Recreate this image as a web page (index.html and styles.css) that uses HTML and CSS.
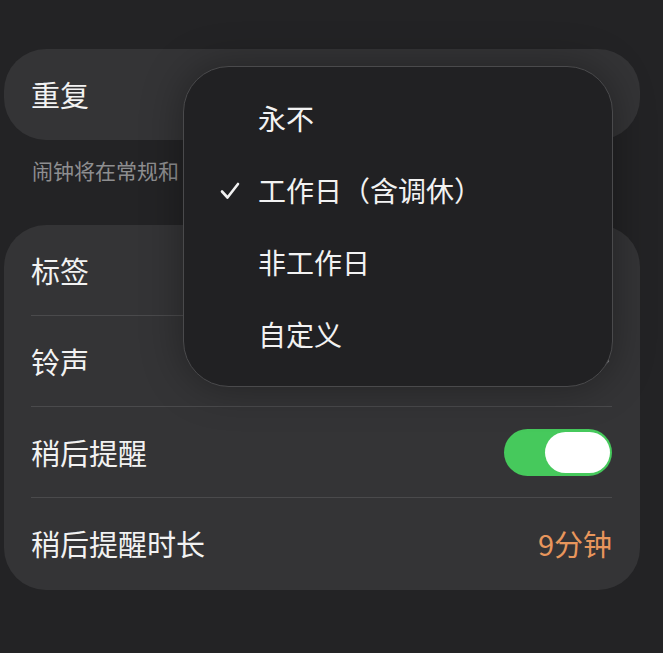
FILE: index.html
```html
<!DOCTYPE html>
<html lang="zh-CN">
<head>
    <meta charset="UTF-8">
    <meta name="viewport" content="width=device-width, initial-scale=1.0">
    <title>闹钟设置</title>
    <link rel="stylesheet" href="styles.css">
</head>
<body>

    <!-- Repeat -->
    <div class="card card-repeat">
        <div class="row">
            <span class="row-title">重复</span>
        </div>
    </div>
    <p class="caption">闹钟将在常规和</p>

    <!-- Options -->
    <div class="card">
        <div class="row">
            <span class="row-title">标签</span>
        </div>
        <div class="divider"></div>
        <div class="row">
            <span class="row-title">铃声</span>
            <svg class="chevron" width="12" height="20" viewBox="0 0 12 20">
                <path d="M2 2 L10 10 L2 18" fill="none" stroke="#8a8a8c" stroke-width="2.4" stroke-linecap="round" stroke-linejoin="round"/>
            </svg>
        </div>
        <div class="divider"></div>
        <div class="row">
            <span class="row-title">稍后提醒</span>
            <div class="switch on"><div class="knob"></div></div>
        </div>
        <div class="divider"></div>
        <div class="row">
            <span class="row-title">稍后提醒时长</span>
            <span class="row-value">9分钟</span>
        </div>
    </div>

    <!-- Repeat menu (popup) -->
    <div class="menu">
        <div class="menu-item">永不</div>
        <div class="menu-item checked">
            <svg class="check" width="20" height="18" viewBox="0 0 20 18">
                <path d="M2 9.5 L7.5 15.5 L18 2" fill="none" stroke="#f2f2f2" stroke-width="2.6" stroke-linecap="round" stroke-linejoin="round"/>
            </svg>
            工作日（含调休）
        </div>
        <div class="menu-item">非工作日</div>
        <div class="menu-item">自定义</div>
    </div>

</body>
</html>
```

FILE: styles.css
```css
/* Page */
body {
    margin: 0;
    padding: 49px 23px 0 4px;
    background-color: #232325;
    font-family: "Noto Sans CJK SC", "Noto Sans", sans-serif;
    color: #f2f2f2;
    height: 653px;
    box-sizing: border-box;
    overflow: hidden;
    position: relative;
}

/* Cards */
.card {
    background-color: #343436;
    border-radius: 42px;
    padding: 0 28px 2px 27px;
}

.card-repeat {
    height: 91px;
    display: flex;
    align-items: center;
    padding-bottom: 0;
}

.row {
    height: 90px;
    display: flex;
    align-items: center;
    justify-content: space-between;
}

.card-repeat .row {
    height: auto;
    flex: 1;
}

.row-title {
    font-size: 29px;
    line-height: 1;
}

.row-value {
    font-size: 29px;
    color: #e8965c;
}

.divider {
    height: 1px;
    background-color: #4a4a4c;
}

.caption {
    margin: 15px 0 40px 28px;
    font-size: 21px;
    line-height: 30px;
    color: #8e8e90;
    white-space: nowrap;
}

.chevron {
    margin-right: 2px;
}

/* Toggle switch */
.switch {
    width: 108px;
    height: 47px;
    border-radius: 24px;
    background-color: #46c95c;
    display: flex;
    align-items: center;
    justify-content: flex-end;
    padding: 0 2px;
    box-sizing: border-box;
    margin-top: 1px;
}

.knob {
    width: 65px;
    height: 41px;
    border-radius: 21px;
    background-color: #ffffff;
}

/* Popup menu, floats over the cards */
.menu {
    position: absolute;
    top: 66px;
    left: 183px;
    width: 430px;
    height: 321px;
    box-sizing: border-box;
    padding: 15px 0 16px 0;
    background-color: #212123;
    border: 1px solid #4a4a4c;
    border-radius: 46px;
    box-shadow: 0 0 40px rgba(0, 0, 0, 0.35);
}

.menu-item {
    height: 72px;
    display: flex;
    align-items: center;
    padding-left: 74px;
    font-size: 28px;
    position: relative;
}

.check {
    position: absolute;
    left: 36px;
    top: 28px;
}
```
